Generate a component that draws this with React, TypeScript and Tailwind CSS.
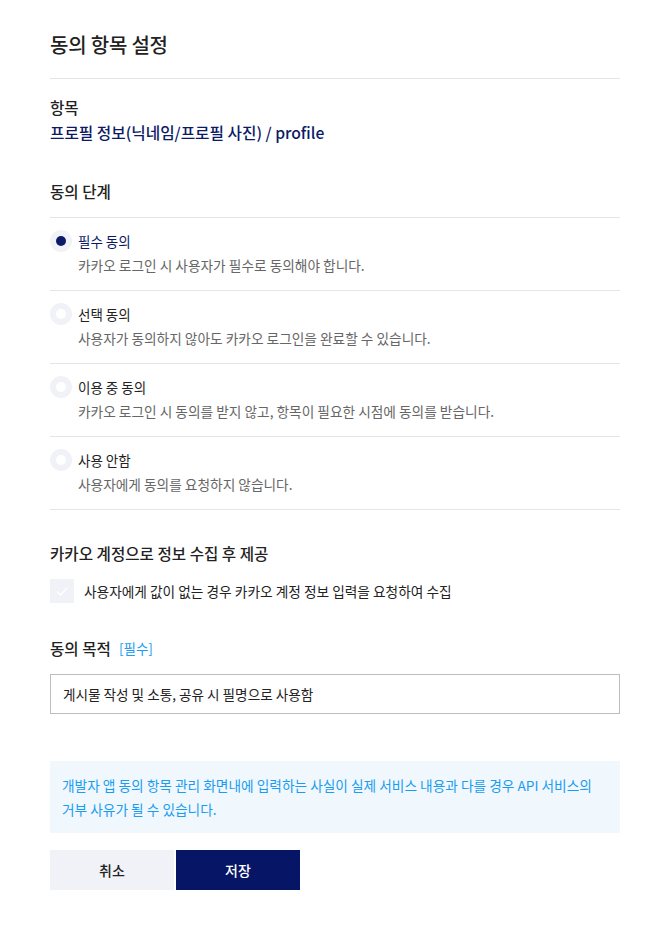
import { useState } from "react"

const options = [
  { key: "required", label: "필수 동의", desc: "카카오 로그인 시 사용자가 필수로 동의해야 합니다." },
  { key: "optional", label: "선택 동의", desc: "사용자가 동의하지 않아도 카카오 로그인을 완료할 수 있습니다." },
  { key: "inuse", label: "이용 중 동의", desc: "카카오 로그인 시 동의를 받지 않고, 항목이 필요한 시점에 동의를 받습니다." },
  { key: "none", label: "사용 안함", desc: "사용자에게 동의를 요청하지 않습니다." },
]

export default function App() {
  const [level, setLevel] = useState("required")
  const [collect, setCollect] = useState(false)
  const [purpose, setPurpose] = useState("게시물 작성 및 소통, 공유 시 필명으로 사용함")

  return (
    <div className="min-h-screen bg-white px-[50px] pt-[31px] text-[#222] [font-family:'Noto_Sans_CJK_KR','Noto_Sans',sans-serif]">
      <h1 className="pb-[19px] text-[20px] font-medium leading-[28px] tracking-[-0.2px]">동의 항목 설정</h1>
      <div className="border-t border-[#e5e5e5]" />

      {/* Item */}
      <div className="pt-[16px]">
        <div className="text-[15.6px] font-medium leading-[24px]">항목</div>
        <div className="mt-[2px] text-[15.7px] font-medium leading-[24px] text-[#0b1a66]">
          프로필 정보(닉네임/프로필 사진) / profile
        </div>
      </div>

      {/* Consent level */}
      <div className="mt-[34px] pb-[14px] text-[15.6px] font-medium leading-[24px]">동의 단계</div>
      <div className="border-t border-[#e5e5e5]">
        {options.map((o) => {
          const on = level === o.key
          return (
            <label
              key={o.key}
              onClick={() => setLevel(o.key)}
              className="flex cursor-pointer gap-[6px] border-b border-[#e5e5e5] pt-[12px] pb-[14px]"
            >
              <span className="flex h-[22px] w-[22px] shrink-0 items-center justify-center rounded-full bg-[#f1f2f7]">
                <span className={`h-[10px] w-[10px] rounded-full ${on ? "bg-[#0b1a66]" : "bg-white"}`} />
              </span>
              <span className="flex flex-col">
                <span className={`text-[13.5px] leading-[22px] ${on ? "text-[#0b1a66]" : "text-[#222]"}`}>{o.label}</span>
                <span className="mt-[2px] text-[13.7px] leading-[22px] text-[#666]">{o.desc}</span>
              </span>
            </label>
          )
        })}
      </div>

      {/* Kakao account */}
      <div className="mt-[31px] text-[15.6px] font-medium leading-[24px]">카카오 계정으로 정보 수집 후 제공</div>
      <label onClick={() => setCollect(!collect)} className="mt-[14px] flex cursor-pointer items-center gap-[10px]">
        <span className={`flex h-[24px] w-[24px] items-center justify-center ${collect ? "bg-[#0b1a66]" : "bg-[#f1f2f7]"}`}>
          <svg width="12" height="9" viewBox="0 0 12 9" fill="none">
            <path d="M1 4.5L4.5 8L11 1" stroke="white" strokeWidth="1.5" />
          </svg>
        </span>
        <span className="text-[13.7px] leading-[22px] text-[#222]">사용자에게 값이 없는 경우 카카오 계정 정보 입력을 요청하여 수집</span>
      </label>

      {/* Purpose */}
      <div className="mt-[33px] flex items-center gap-[8px]">
        <span className="text-[15.6px] font-medium leading-[24px]">동의 목적</span>
        <span className="text-[13.5px] leading-[24px] text-[#1a9cf0]">[필수]</span>
      </div>
      <input
        value={purpose}
        onChange={(e) => setPurpose(e.target.value)}
        className="mt-[14px] h-[40px] w-full border border-[#bdbdbd] px-[12px] text-[13.6px] text-[#222] outline-none"
      />

      {/* Notice */}
      <div className="mt-[47px] bg-[#f0f8fe] px-[12px] py-[12px] text-[13.7px] leading-[24px] text-[#1a9cf0]">
        개발자 앱 동의 항목 관리 화면내에 입력하는 사실이 실제 서비스 내용과 다를 경우 API 서비스의
        <br />
        거부 사유가 될 수 있습니다.
      </div>

      <div className="mt-[17px] flex gap-[2px]">
        <button className="h-[40px] w-[124px] bg-[#f1f2f7] text-[14px] font-medium text-[#222]">취소</button>
        <button className="h-[40px] w-[124px] bg-[#061566] text-[14px] font-medium text-white">저장</button>
      </div>
    </div>
  )
}
